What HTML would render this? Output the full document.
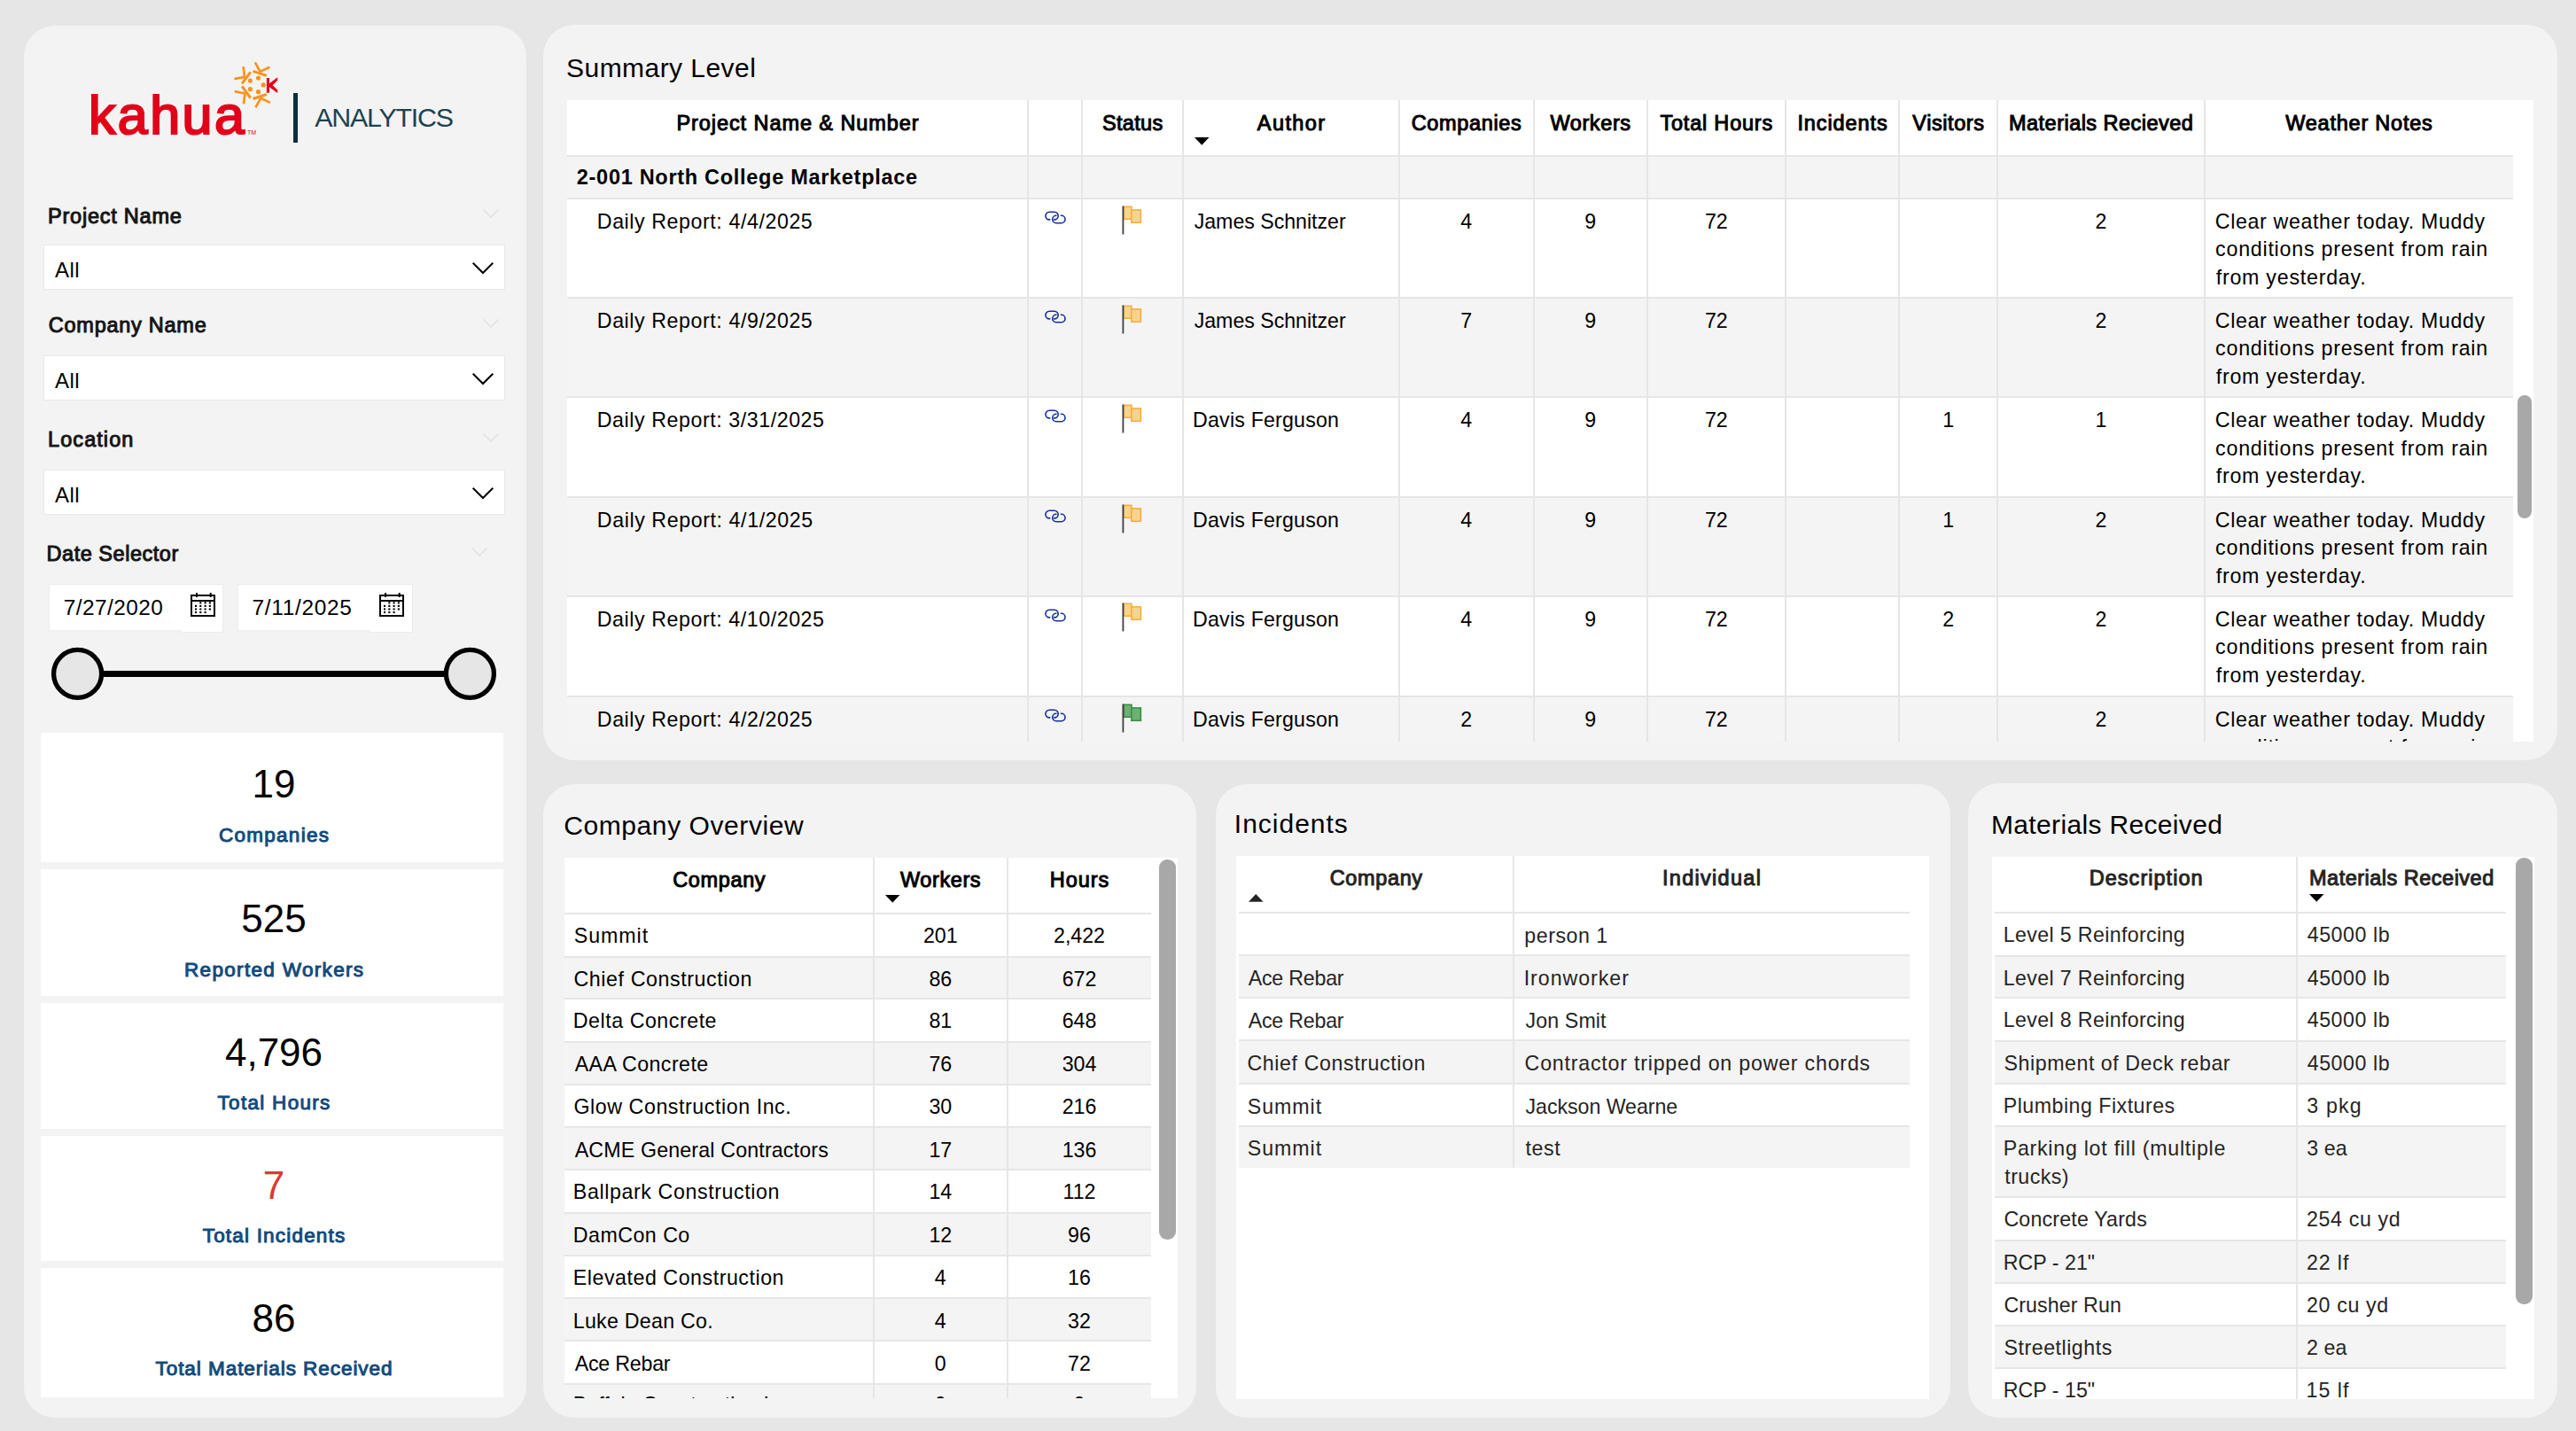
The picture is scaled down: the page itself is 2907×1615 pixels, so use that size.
<!DOCTYPE html>
<html><head><meta charset="utf-8"><title>Kahua Analytics</title>
<style>
html,body{margin:0;padding:0;}
body{width:2907px;height:1615px;position:relative;overflow:hidden;background:#e6e6e6;font-family:"Liberation Sans", sans-serif;}
.t{position:absolute;white-space:nowrap;}
.b{position:absolute;}
svg{position:absolute;overflow:visible;}
</style></head><body>

<div class="b" style="left:26.5px;top:29.0px;width:567.0px;height:1571.0px;background:#f3f3f3;border-radius:35px;"></div>
<div class="b" style="left:613.0px;top:28.0px;width:2273.0px;height:830.0px;background:#f3f3f3;border-radius:35px;"></div>
<div class="b" style="left:613.0px;top:885.0px;width:737.0px;height:715.0px;background:#f3f3f3;border-radius:35px;"></div>
<div class="b" style="left:1372.0px;top:885.0px;width:829.0px;height:715.0px;background:#f3f3f3;border-radius:35px;"></div>
<div class="b" style="left:2221.0px;top:884.0px;width:665.0px;height:716.0px;background:#f3f3f3;border-radius:35px;"></div>
<div class="t" style="left:99.9px;top:100.0px;font-size:61px;line-height:61px;color:#e2001a;-webkit-text-stroke:2.2px #e2001a;letter-spacing:2.45px;">kahua</div>
<div class="t" style="left:278.9px;top:146.1px;font-size:7px;line-height:7px;font-weight:400;color:#e2001a;">TM</div>
<svg style="left:250px;top:60px;" width="80" height="72" viewBox="250 60 80 72">
<g transform="translate(289,95.9)" fill="none" stroke="#f7941d"><g transform="rotate(18)"><path d="M-8.1,-13.7 L8.1,-13.7" stroke-width="3.1"/><path d="M-9,-23.9 L-0.4,-15.8 L8.4,-23.9" stroke-width="2.7" stroke-linejoin="round"/></g><g transform="rotate(-54)"><path d="M-8.1,-13.7 L8.1,-13.7" stroke-width="3.1"/><path d="M-9,-23.9 L-0.4,-15.8 L8.4,-23.9" stroke-width="2.7" stroke-linejoin="round"/></g><g transform="rotate(-126)"><path d="M-8.1,-13.7 L8.1,-13.7" stroke-width="3.1"/><path d="M-9,-23.9 L-0.4,-15.8 L8.4,-23.9" stroke-width="2.7" stroke-linejoin="round"/></g><g transform="rotate(162)"><path d="M-8.1,-13.7 L8.1,-13.7" stroke-width="3.1"/><path d="M-9,-23.9 L-0.4,-15.8 L8.4,-23.9" stroke-width="2.7" stroke-linejoin="round"/></g></g>
<g fill="#f7941d" transform="translate(289,95.9)">
<circle cx="8.2" cy="0" r="2.6"/><circle cx="2.53" cy="-7.8" r="2.6"/><circle cx="-6.63" cy="-4.82" r="2.6"/><circle cx="-6.63" cy="4.82" r="2.6"/><circle cx="2.53" cy="7.8" r="2.6"/>
</g>
<path fill="#e2001a" d="M300.9,88 L303.9,88 L303.9,94.2 L313.2,87.3 L313.2,90.8 L307.6,96.3 L313.2,101.4 L313.2,104.9 L303.9,98.3 L303.9,104.7 L300.9,104.7 Z"/>
</svg>
<div class="b" style="left:331.0px;top:105.0px;width:5.0px;height:56.0px;background:#06303d;"></div>
<div class="t" style="left:355.3px;top:116.8px;font-size:30.4px;line-height:30.4px;font-weight:400;color:#1d4250;letter-spacing:-1.24px;">ANALYTICS</div>
<div class="t" style="left:54.1px;top:232.5px;font-size:23.5px;line-height:23.5px;font-weight:400;color:#151515;letter-spacing:0.759px;-webkit-text-stroke:1.0px #151515;">Project Name</div>
<svg style="left:545px;top:236.0px;" width="18" height="10" viewBox="0 0 18 10"><path d="M0.5,0.5 L9,9 L17.5,0.5" fill="none" stroke="#e2e2e2" stroke-width="1.6"/></svg>
<div class="b" style="left:48.6px;top:275.5px;width:521.4px;height:51.9px;background:#ffffff;box-sizing:border-box;border:1px solid #e8e8e8;"></div>
<div class="t" style="left:62.0px;top:292.5px;font-size:24px;line-height:24px;font-weight:400;color:#000;letter-spacing:0.510px;">All</div>
<svg style="left:533px;top:295.9px;" width="24" height="13" viewBox="0 0 24 13"><path d="M0.7,0.7 L12,12 L23.3,0.7" fill="none" stroke="#000" stroke-width="2"/></svg>
<div class="t" style="left:54.8px;top:356.1px;font-size:23.5px;line-height:23.5px;font-weight:400;color:#151515;letter-spacing:0.740px;-webkit-text-stroke:1.0px #151515;">Company Name</div>
<svg style="left:545px;top:360.0px;" width="18" height="10" viewBox="0 0 18 10"><path d="M0.5,0.5 L9,9 L17.5,0.5" fill="none" stroke="#e2e2e2" stroke-width="1.6"/></svg>
<div class="b" style="left:48.6px;top:400.9px;width:521.4px;height:50.7px;background:#ffffff;box-sizing:border-box;border:1px solid #e8e8e8;"></div>
<div class="t" style="left:62.0px;top:417.9px;font-size:24px;line-height:24px;font-weight:400;color:#000;letter-spacing:0.510px;">All</div>
<svg style="left:533px;top:420.8px;" width="24" height="13" viewBox="0 0 24 13"><path d="M0.7,0.7 L12,12 L23.3,0.7" fill="none" stroke="#000" stroke-width="2"/></svg>
<div class="t" style="left:54.1px;top:484.6px;font-size:23.5px;line-height:23.5px;font-weight:400;color:#151515;letter-spacing:1.054px;-webkit-text-stroke:1.0px #151515;">Location</div>
<svg style="left:545px;top:489.0px;" width="18" height="10" viewBox="0 0 18 10"><path d="M0.5,0.5 L9,9 L17.5,0.5" fill="none" stroke="#e2e2e2" stroke-width="1.6"/></svg>
<div class="b" style="left:48.6px;top:530.0px;width:521.4px;height:50.8px;background:#ffffff;box-sizing:border-box;border:1px solid #e8e8e8;"></div>
<div class="t" style="left:62.0px;top:547.0px;font-size:24px;line-height:24px;font-weight:400;color:#000;letter-spacing:0.510px;">All</div>
<svg style="left:533px;top:549.9px;" width="24" height="13" viewBox="0 0 24 13"><path d="M0.7,0.7 L12,12 L23.3,0.7" fill="none" stroke="#000" stroke-width="2"/></svg>
<div class="t" style="left:52.6px;top:613.8px;font-size:23.5px;line-height:23.5px;font-weight:400;color:#151515;letter-spacing:0.520px;-webkit-text-stroke:1.0px #151515;">Date Selector</div>
<svg style="left:532px;top:618px;" width="18" height="10" viewBox="0 0 18 10"><path d="M0.5,0.5 L9,9 L17.5,0.5" fill="none" stroke="#e2e2e2" stroke-width="1.6"/></svg>
<div class="b" style="left:54.7px;top:659.0px;width:197.3px;height:55.0px;background:#ffffff;box-sizing:border-box;border:1px solid #ebebeb;"></div>
<div class="b" style="left:55.7px;top:711.0px;width:149.6px;height:3.0px;background:#f1f1f1;"></div>
<div class="t" style="left:71.8px;top:673.9px;font-size:24.4px;line-height:24.4px;font-weight:400;color:#000;letter-spacing:0.449px;">7/27/2020</div>
<svg style="left:214.7px;top:668.8px;" width="30" height="28" viewBox="0 0 30 28">
<rect x="1" y="3" width="26" height="23" fill="none" stroke="#000" stroke-width="2"/>
<line x1="1" y1="9" x2="27" y2="9" stroke="#000" stroke-width="2"/>
<line x1="7" y1="0" x2="7" y2="5" stroke="#000" stroke-width="2"/>
<line x1="22.7" y1="0" x2="22.7" y2="5" stroke="#000" stroke-width="2"/>
<g fill="#000"><rect x="10.27" y="10.30" width="2.1" height="2.1"/><rect x="15.54" y="10.30" width="2.1" height="2.1"/><rect x="20.81" y="10.30" width="2.1" height="2.1"/><rect x="5.00" y="13.87" width="2.1" height="2.1"/><rect x="10.27" y="13.87" width="2.1" height="2.1"/><rect x="15.54" y="13.87" width="2.1" height="2.1"/><rect x="20.81" y="13.87" width="2.1" height="2.1"/><rect x="5.00" y="17.44" width="2.1" height="2.1"/><rect x="10.27" y="17.44" width="2.1" height="2.1"/><rect x="15.54" y="17.44" width="2.1" height="2.1"/><rect x="20.81" y="17.44" width="2.1" height="2.1"/><rect x="5.00" y="21.01" width="2.1" height="2.1"/><rect x="10.27" y="21.01" width="2.1" height="2.1"/><rect x="15.54" y="21.01" width="2.1" height="2.1"/></g></svg>
<div class="b" style="left:267.5px;top:659.0px;width:198.5px;height:55.0px;background:#ffffff;box-sizing:border-box;border:1px solid #ebebeb;"></div>
<div class="b" style="left:268.5px;top:711.0px;width:149.6px;height:3.0px;background:#f1f1f1;"></div>
<div class="t" style="left:284.6px;top:673.9px;font-size:24.4px;line-height:24.4px;font-weight:400;color:#000;letter-spacing:0.693px;">7/11/2025</div>
<svg style="left:427.5px;top:668.8px;" width="30" height="28" viewBox="0 0 30 28">
<rect x="1" y="3" width="26" height="23" fill="none" stroke="#000" stroke-width="2"/>
<line x1="1" y1="9" x2="27" y2="9" stroke="#000" stroke-width="2"/>
<line x1="7" y1="0" x2="7" y2="5" stroke="#000" stroke-width="2"/>
<line x1="22.7" y1="0" x2="22.7" y2="5" stroke="#000" stroke-width="2"/>
<g fill="#000"><rect x="10.27" y="10.30" width="2.1" height="2.1"/><rect x="15.54" y="10.30" width="2.1" height="2.1"/><rect x="20.81" y="10.30" width="2.1" height="2.1"/><rect x="5.00" y="13.87" width="2.1" height="2.1"/><rect x="10.27" y="13.87" width="2.1" height="2.1"/><rect x="15.54" y="13.87" width="2.1" height="2.1"/><rect x="20.81" y="13.87" width="2.1" height="2.1"/><rect x="5.00" y="17.44" width="2.1" height="2.1"/><rect x="10.27" y="17.44" width="2.1" height="2.1"/><rect x="15.54" y="17.44" width="2.1" height="2.1"/><rect x="20.81" y="17.44" width="2.1" height="2.1"/><rect x="5.00" y="21.01" width="2.1" height="2.1"/><rect x="10.27" y="21.01" width="2.1" height="2.1"/><rect x="15.54" y="21.01" width="2.1" height="2.1"/></g></svg>
<svg style="left:0px;top:0px;" width="620" height="820">
<line x1="110" y1="760.4" x2="510" y2="760.4" stroke="#000" stroke-width="7"/>
<circle cx="87.6" cy="760.4" r="27" fill="#e6e6e6" stroke="#000" stroke-width="5.3"/>
<circle cx="530.4" cy="760.4" r="27" fill="#e6e6e6" stroke="#000" stroke-width="5.3"/>
</svg>
<div class="b" style="left:46.0px;top:827.0px;width:522.0px;height:146.0px;background:#ffffff;"></div>
<div class="t" style="left:59.0px;width:500px;text-align:center;top:862.7px;font-size:44px;line-height:44px;font-weight:400;color:#000;">19</div>
<div class="t" style="left:59.6px;width:500px;text-align:center;top:931.6px;font-size:22.5px;line-height:22.5px;font-weight:400;color:#114a7d;letter-spacing:1.270px;-webkit-text-stroke:1.0px #114a7d;">Companies</div>
<div class="b" style="left:46.0px;top:980.5px;width:522.0px;height:143.5px;background:#ffffff;"></div>
<div class="t" style="left:59.0px;width:500px;text-align:center;top:1014.7px;font-size:44px;line-height:44px;font-weight:400;color:#000;">525</div>
<div class="t" style="left:59.7px;width:500px;text-align:center;top:1083.9px;font-size:22.5px;line-height:22.5px;font-weight:400;color:#114a7d;letter-spacing:1.330px;-webkit-text-stroke:1.0px #114a7d;">Reported Workers</div>
<div class="b" style="left:46.0px;top:1132.0px;width:522.0px;height:142.0px;background:#ffffff;"></div>
<div class="t" style="left:59.0px;width:500px;text-align:center;top:1165.5px;font-size:44px;line-height:44px;font-weight:400;color:#000;">4,796</div>
<div class="t" style="left:59.6px;width:500px;text-align:center;top:1233.9px;font-size:22.5px;line-height:22.5px;font-weight:400;color:#114a7d;letter-spacing:1.299px;-webkit-text-stroke:1.0px #114a7d;">Total Hours</div>
<div class="b" style="left:46.0px;top:1282.0px;width:522.0px;height:141.0px;background:#ffffff;"></div>
<div class="t" style="left:59.0px;width:500px;text-align:center;top:1315.7px;font-size:44px;line-height:44px;font-weight:400;color:#d83b2f;">7</div>
<div class="t" style="left:59.6px;width:500px;text-align:center;top:1383.9px;font-size:22.5px;line-height:22.5px;font-weight:400;color:#114a7d;letter-spacing:1.196px;-webkit-text-stroke:1.0px #114a7d;">Total Incidents</div>
<div class="b" style="left:46.0px;top:1430.6px;width:522.0px;height:146.4px;background:#ffffff;"></div>
<div class="t" style="left:59.0px;width:500px;text-align:center;top:1465.7px;font-size:44px;line-height:44px;font-weight:400;color:#000;">86</div>
<div class="t" style="left:59.5px;width:500px;text-align:center;top:1533.9px;font-size:22.5px;line-height:22.5px;font-weight:400;color:#114a7d;letter-spacing:0.955px;-webkit-text-stroke:1.0px #114a7d;">Total Materials Received</div>
<div class="t" style="left:639.1px;top:61.6px;font-size:30px;line-height:30px;font-weight:400;color:#000;letter-spacing:0.446px;">Summary Level</div>
<div class="b" style="left:640.0px;top:113.0px;width:2219.0px;height:724.0px;background:#ffffff;"></div>
<div class="b" style="left:640.0px;top:177.0px;width:2196.0px;height:47.0px;background:#f4f4f4;"></div>
<div class="b" style="left:640.0px;top:336.0px;width:2196.0px;height:112.3px;background:#f4f4f4;"></div>
<div class="b" style="left:640.0px;top:561.0px;width:2196.0px;height:111.8px;background:#f4f4f4;"></div>
<div class="b" style="left:640.0px;top:786.0px;width:2196.0px;height:51.0px;background:#f4f4f4;"></div>
<div class="b" style="left:640.0px;top:175.0px;width:2196.0px;height:2.0px;background:#e6e6e6;"></div>
<div class="b" style="left:640.0px;top:223.0px;width:2196.0px;height:2.0px;background:#e6e6e6;"></div>
<div class="b" style="left:640.0px;top:335.0px;width:2196.0px;height:2.0px;background:#e6e6e6;"></div>
<div class="b" style="left:640.0px;top:447.3px;width:2196.0px;height:2.0px;background:#e6e6e6;"></div>
<div class="b" style="left:640.0px;top:560.0px;width:2196.0px;height:2.0px;background:#e6e6e6;"></div>
<div class="b" style="left:640.0px;top:671.8px;width:2196.0px;height:2.0px;background:#e6e6e6;"></div>
<div class="b" style="left:640.0px;top:785.0px;width:2196.0px;height:2.0px;background:#e6e6e6;"></div>
<div class="b" style="left:1159.0px;top:113.0px;width:2.0px;height:724.0px;background:#e6e6e6;"></div>
<div class="b" style="left:1220.0px;top:113.0px;width:2.0px;height:724.0px;background:#e6e6e6;"></div>
<div class="b" style="left:1334.0px;top:113.0px;width:2.0px;height:724.0px;background:#e6e6e6;"></div>
<div class="b" style="left:1578.0px;top:113.0px;width:2.0px;height:724.0px;background:#e6e6e6;"></div>
<div class="b" style="left:1729.5px;top:113.0px;width:2.0px;height:724.0px;background:#e6e6e6;"></div>
<div class="b" style="left:1858.0px;top:113.0px;width:2.0px;height:724.0px;background:#e6e6e6;"></div>
<div class="b" style="left:2013.7px;top:113.0px;width:2.0px;height:724.0px;background:#e6e6e6;"></div>
<div class="b" style="left:2142.4px;top:113.0px;width:2.0px;height:724.0px;background:#e6e6e6;"></div>
<div class="b" style="left:2253.0px;top:113.0px;width:2.0px;height:724.0px;background:#e6e6e6;"></div>
<div class="b" style="left:2487.0px;top:113.0px;width:2.0px;height:724.0px;background:#e6e6e6;"></div>
<div class="t" style="left:640.5px;width:520px;text-align:center;top:127.9px;font-size:23.5px;line-height:23.5px;font-weight:400;color:#000;letter-spacing:0.930px;-webkit-text-stroke:1.0px #000;">Project Name &amp; Number</div>
<div class="t" style="left:1221.2px;width:114px;text-align:center;top:127.9px;font-size:23.5px;line-height:23.5px;font-weight:400;color:#000;letter-spacing:0.332px;-webkit-text-stroke:1.0px #000;">Status</div>
<div class="t" style="left:1335.7px;width:244px;text-align:center;top:127.9px;font-size:23.5px;line-height:23.5px;font-weight:400;color:#000;letter-spacing:1.429px;-webkit-text-stroke:1.0px #000;">Author</div>
<div class="t" style="left:1579.3px;width:151.5px;text-align:center;top:127.9px;font-size:23.5px;line-height:23.5px;font-weight:400;color:#000;letter-spacing:0.648px;-webkit-text-stroke:1.0px #000;">Companies</div>
<div class="t" style="left:1730.8px;width:128.5px;text-align:center;top:127.9px;font-size:23.5px;line-height:23.5px;font-weight:400;color:#000;letter-spacing:0.595px;-webkit-text-stroke:1.0px #000;">Workers</div>
<div class="t" style="left:1859.4px;width:155.70000000000005px;text-align:center;top:127.9px;font-size:23.5px;line-height:23.5px;font-weight:400;color:#000;letter-spacing:0.798px;-webkit-text-stroke:1.0px #000;">Total Hours</div>
<div class="t" style="left:2015.2px;width:128.70000000000005px;text-align:center;top:127.9px;font-size:23.5px;line-height:23.5px;font-weight:400;color:#000;letter-spacing:0.903px;-webkit-text-stroke:1.0px #000;">Incidents</div>
<div class="t" style="left:2143.7px;width:110.59999999999991px;text-align:center;top:127.9px;font-size:23.5px;line-height:23.5px;font-weight:400;color:#000;letter-spacing:0.576px;-webkit-text-stroke:1.0px #000;">Visitors</div>
<div class="t" style="left:2254.2px;width:234px;text-align:center;top:127.9px;font-size:23.5px;line-height:23.5px;font-weight:400;color:#000;letter-spacing:0.473px;-webkit-text-stroke:1.0px #000;">Materials Recieved</div>
<div class="t" style="left:2488.4px;width:348px;text-align:center;top:127.9px;font-size:23.5px;line-height:23.5px;font-weight:400;color:#000;letter-spacing:0.772px;-webkit-text-stroke:1.0px #000;">Weather Notes</div>
<svg style="left:1348px;top:155px;" width="17" height="9" viewBox="0 0 17 9"><path d="M0,0 L16.5,0 L8.25,8.7 Z" fill="#000"/></svg>
<div class="t" style="left:650.8px;top:189.1px;font-size:23.5px;line-height:23.5px;font-weight:700;color:#000;letter-spacing:0.706px;">2-001 North College Marketplace</div>
<div style="position:absolute;left:0;top:0;width:2907px;height:837px;overflow:hidden;">
<div class="t" style="left:673.8px;top:238.7px;font-size:23.2px;line-height:23.2px;font-weight:400;color:#000;letter-spacing:0.583px;">Daily Report: 4/4/2025</div>
<svg style="left:1177.0px;top:237.0px;" width="28" height="18" viewBox="0 0 28 18"><g fill="none" stroke="#14309a" stroke-width="1.6" stroke-linecap="round"><path d="M7.7,10.9 L7.25,10.9 A4.35,4.35 0 0 1 7.25,2.2 L12.85,2.2 A4.35,4.35 0 0 1 12.85,10.9 L12.6,10.9"/><path d="M14.95,6.2 A4.25,4.25 0 0 0 14.95,14.7 L20.75,14.7 A4.25,4.25 0 0 0 20.75,6.2 L20.4,6.2"/></g></svg>
<svg style="left:1266.0px;top:231.6px;" width="24" height="34" viewBox="0 0 24 34"><rect x="2.2" y="1.3" width="8.8" height="14" fill="#f7d38f" stroke="#f5ac3c" stroke-width="1.5"/><rect x="10.8" y="4.9" width="10.6" height="14.4" fill="#f7d38f" stroke="#f5ac3c" stroke-width="1.5"/><line x1="1.4" y1="0.5" x2="1.4" y2="32.5" stroke="#3f3f3f" stroke-width="1.8"/></svg>
<div class="t" style="left:1347.7px;top:238.7px;font-size:23.2px;line-height:23.2px;font-weight:400;color:#000;letter-spacing:-0.032px;">James Schnitzer</div>
<div class="t" style="left:1594.8px;width:120px;text-align:center;top:238.7px;font-size:23.2px;line-height:23.2px;font-weight:400;color:#000;">4</div>
<div class="t" style="left:1734.8px;width:120px;text-align:center;top:238.7px;font-size:23.2px;line-height:23.2px;font-weight:400;color:#000;">9</div>
<div class="t" style="left:1876.8px;width:120px;text-align:center;top:238.7px;font-size:23.2px;line-height:23.2px;font-weight:400;color:#000;">72</div>
<div class="t" style="left:2311.0px;width:120px;text-align:center;top:238.7px;font-size:23.2px;line-height:23.2px;font-weight:400;color:#000;">2</div>
<div class="t" style="left:2499.8px;top:238.7px;font-size:23.2px;line-height:23.2px;font-weight:400;color:#000;letter-spacing:0.643px;">Clear weather today. Muddy</div>
<div class="t" style="left:2500.1px;top:270.3px;font-size:23.2px;line-height:23.2px;font-weight:400;color:#000;letter-spacing:0.776px;">conditions present from rain</div>
<div class="t" style="left:2500.7px;top:301.9px;font-size:23.2px;line-height:23.2px;font-weight:400;color:#000;letter-spacing:0.773px;">from yesterday.</div>
<div class="t" style="left:673.8px;top:350.7px;font-size:23.2px;line-height:23.2px;font-weight:400;color:#000;letter-spacing:0.583px;">Daily Report: 4/9/2025</div>
<svg style="left:1177.0px;top:349.0px;" width="28" height="18" viewBox="0 0 28 18"><g fill="none" stroke="#14309a" stroke-width="1.6" stroke-linecap="round"><path d="M7.7,10.9 L7.25,10.9 A4.35,4.35 0 0 1 7.25,2.2 L12.85,2.2 A4.35,4.35 0 0 1 12.85,10.9 L12.6,10.9"/><path d="M14.95,6.2 A4.25,4.25 0 0 0 14.95,14.7 L20.75,14.7 A4.25,4.25 0 0 0 20.75,6.2 L20.4,6.2"/></g></svg>
<svg style="left:1266.0px;top:343.6px;" width="24" height="34" viewBox="0 0 24 34"><rect x="2.2" y="1.3" width="8.8" height="14" fill="#f7d38f" stroke="#f5ac3c" stroke-width="1.5"/><rect x="10.8" y="4.9" width="10.6" height="14.4" fill="#f7d38f" stroke="#f5ac3c" stroke-width="1.5"/><line x1="1.4" y1="0.5" x2="1.4" y2="32.5" stroke="#3f3f3f" stroke-width="1.8"/></svg>
<div class="t" style="left:1347.7px;top:350.7px;font-size:23.2px;line-height:23.2px;font-weight:400;color:#000;letter-spacing:-0.032px;">James Schnitzer</div>
<div class="t" style="left:1594.8px;width:120px;text-align:center;top:350.7px;font-size:23.2px;line-height:23.2px;font-weight:400;color:#000;">7</div>
<div class="t" style="left:1734.8px;width:120px;text-align:center;top:350.7px;font-size:23.2px;line-height:23.2px;font-weight:400;color:#000;">9</div>
<div class="t" style="left:1876.8px;width:120px;text-align:center;top:350.7px;font-size:23.2px;line-height:23.2px;font-weight:400;color:#000;">72</div>
<div class="t" style="left:2311.0px;width:120px;text-align:center;top:350.7px;font-size:23.2px;line-height:23.2px;font-weight:400;color:#000;">2</div>
<div class="t" style="left:2499.8px;top:350.7px;font-size:23.2px;line-height:23.2px;font-weight:400;color:#000;letter-spacing:0.643px;">Clear weather today. Muddy</div>
<div class="t" style="left:2500.1px;top:382.3px;font-size:23.2px;line-height:23.2px;font-weight:400;color:#000;letter-spacing:0.776px;">conditions present from rain</div>
<div class="t" style="left:2500.7px;top:413.9px;font-size:23.2px;line-height:23.2px;font-weight:400;color:#000;letter-spacing:0.773px;">from yesterday.</div>
<div class="t" style="left:673.8px;top:463.0px;font-size:23.2px;line-height:23.2px;font-weight:400;color:#000;letter-spacing:0.571px;">Daily Report: 3/31/2025</div>
<svg style="left:1177.0px;top:461.3px;" width="28" height="18" viewBox="0 0 28 18"><g fill="none" stroke="#14309a" stroke-width="1.6" stroke-linecap="round"><path d="M7.7,10.9 L7.25,10.9 A4.35,4.35 0 0 1 7.25,2.2 L12.85,2.2 A4.35,4.35 0 0 1 12.85,10.9 L12.6,10.9"/><path d="M14.95,6.2 A4.25,4.25 0 0 0 14.95,14.7 L20.75,14.7 A4.25,4.25 0 0 0 20.75,6.2 L20.4,6.2"/></g></svg>
<svg style="left:1266.0px;top:455.9px;" width="24" height="34" viewBox="0 0 24 34"><rect x="2.2" y="1.3" width="8.8" height="14" fill="#f7d38f" stroke="#f5ac3c" stroke-width="1.5"/><rect x="10.8" y="4.9" width="10.6" height="14.4" fill="#f7d38f" stroke="#f5ac3c" stroke-width="1.5"/><line x1="1.4" y1="0.5" x2="1.4" y2="32.5" stroke="#3f3f3f" stroke-width="1.8"/></svg>
<div class="t" style="left:1346.1px;top:463.0px;font-size:23.2px;line-height:23.2px;font-weight:400;color:#000;letter-spacing:0.190px;">Davis Ferguson</div>
<div class="t" style="left:1594.8px;width:120px;text-align:center;top:463.0px;font-size:23.2px;line-height:23.2px;font-weight:400;color:#000;">4</div>
<div class="t" style="left:1734.8px;width:120px;text-align:center;top:463.0px;font-size:23.2px;line-height:23.2px;font-weight:400;color:#000;">9</div>
<div class="t" style="left:1876.8px;width:120px;text-align:center;top:463.0px;font-size:23.2px;line-height:23.2px;font-weight:400;color:#000;">72</div>
<div class="t" style="left:2138.7px;width:120px;text-align:center;top:463.0px;font-size:23.2px;line-height:23.2px;font-weight:400;color:#000;">1</div>
<div class="t" style="left:2311.0px;width:120px;text-align:center;top:463.0px;font-size:23.2px;line-height:23.2px;font-weight:400;color:#000;">1</div>
<div class="t" style="left:2499.8px;top:463.0px;font-size:23.2px;line-height:23.2px;font-weight:400;color:#000;letter-spacing:0.643px;">Clear weather today. Muddy</div>
<div class="t" style="left:2500.1px;top:494.6px;font-size:23.2px;line-height:23.2px;font-weight:400;color:#000;letter-spacing:0.776px;">conditions present from rain</div>
<div class="t" style="left:2500.7px;top:526.2px;font-size:23.2px;line-height:23.2px;font-weight:400;color:#000;letter-spacing:0.773px;">from yesterday.</div>
<div class="t" style="left:673.8px;top:575.7px;font-size:23.2px;line-height:23.2px;font-weight:400;color:#000;letter-spacing:0.597px;">Daily Report: 4/1/2025</div>
<svg style="left:1177.0px;top:574.0px;" width="28" height="18" viewBox="0 0 28 18"><g fill="none" stroke="#14309a" stroke-width="1.6" stroke-linecap="round"><path d="M7.7,10.9 L7.25,10.9 A4.35,4.35 0 0 1 7.25,2.2 L12.85,2.2 A4.35,4.35 0 0 1 12.85,10.9 L12.6,10.9"/><path d="M14.95,6.2 A4.25,4.25 0 0 0 14.95,14.7 L20.75,14.7 A4.25,4.25 0 0 0 20.75,6.2 L20.4,6.2"/></g></svg>
<svg style="left:1266.0px;top:568.6px;" width="24" height="34" viewBox="0 0 24 34"><rect x="2.2" y="1.3" width="8.8" height="14" fill="#f7d38f" stroke="#f5ac3c" stroke-width="1.5"/><rect x="10.8" y="4.9" width="10.6" height="14.4" fill="#f7d38f" stroke="#f5ac3c" stroke-width="1.5"/><line x1="1.4" y1="0.5" x2="1.4" y2="32.5" stroke="#3f3f3f" stroke-width="1.8"/></svg>
<div class="t" style="left:1346.1px;top:575.7px;font-size:23.2px;line-height:23.2px;font-weight:400;color:#000;letter-spacing:0.190px;">Davis Ferguson</div>
<div class="t" style="left:1594.8px;width:120px;text-align:center;top:575.7px;font-size:23.2px;line-height:23.2px;font-weight:400;color:#000;">4</div>
<div class="t" style="left:1734.8px;width:120px;text-align:center;top:575.7px;font-size:23.2px;line-height:23.2px;font-weight:400;color:#000;">9</div>
<div class="t" style="left:1876.8px;width:120px;text-align:center;top:575.7px;font-size:23.2px;line-height:23.2px;font-weight:400;color:#000;">72</div>
<div class="t" style="left:2138.7px;width:120px;text-align:center;top:575.7px;font-size:23.2px;line-height:23.2px;font-weight:400;color:#000;">1</div>
<div class="t" style="left:2311.0px;width:120px;text-align:center;top:575.7px;font-size:23.2px;line-height:23.2px;font-weight:400;color:#000;">2</div>
<div class="t" style="left:2499.8px;top:575.7px;font-size:23.2px;line-height:23.2px;font-weight:400;color:#000;letter-spacing:0.643px;">Clear weather today. Muddy</div>
<div class="t" style="left:2500.1px;top:607.3px;font-size:23.2px;line-height:23.2px;font-weight:400;color:#000;letter-spacing:0.776px;">conditions present from rain</div>
<div class="t" style="left:2500.7px;top:638.9px;font-size:23.2px;line-height:23.2px;font-weight:400;color:#000;letter-spacing:0.773px;">from yesterday.</div>
<div class="t" style="left:673.8px;top:687.5px;font-size:23.2px;line-height:23.2px;font-weight:400;color:#000;letter-spacing:0.571px;">Daily Report: 4/10/2025</div>
<svg style="left:1177.0px;top:685.8px;" width="28" height="18" viewBox="0 0 28 18"><g fill="none" stroke="#14309a" stroke-width="1.6" stroke-linecap="round"><path d="M7.7,10.9 L7.25,10.9 A4.35,4.35 0 0 1 7.25,2.2 L12.85,2.2 A4.35,4.35 0 0 1 12.85,10.9 L12.6,10.9"/><path d="M14.95,6.2 A4.25,4.25 0 0 0 14.95,14.7 L20.75,14.7 A4.25,4.25 0 0 0 20.75,6.2 L20.4,6.2"/></g></svg>
<svg style="left:1266.0px;top:680.4px;" width="24" height="34" viewBox="0 0 24 34"><rect x="2.2" y="1.3" width="8.8" height="14" fill="#f7d38f" stroke="#f5ac3c" stroke-width="1.5"/><rect x="10.8" y="4.9" width="10.6" height="14.4" fill="#f7d38f" stroke="#f5ac3c" stroke-width="1.5"/><line x1="1.4" y1="0.5" x2="1.4" y2="32.5" stroke="#3f3f3f" stroke-width="1.8"/></svg>
<div class="t" style="left:1346.1px;top:687.5px;font-size:23.2px;line-height:23.2px;font-weight:400;color:#000;letter-spacing:0.190px;">Davis Ferguson</div>
<div class="t" style="left:1594.8px;width:120px;text-align:center;top:687.5px;font-size:23.2px;line-height:23.2px;font-weight:400;color:#000;">4</div>
<div class="t" style="left:1734.8px;width:120px;text-align:center;top:687.5px;font-size:23.2px;line-height:23.2px;font-weight:400;color:#000;">9</div>
<div class="t" style="left:1876.8px;width:120px;text-align:center;top:687.5px;font-size:23.2px;line-height:23.2px;font-weight:400;color:#000;">72</div>
<div class="t" style="left:2138.7px;width:120px;text-align:center;top:687.5px;font-size:23.2px;line-height:23.2px;font-weight:400;color:#000;">2</div>
<div class="t" style="left:2311.0px;width:120px;text-align:center;top:687.5px;font-size:23.2px;line-height:23.2px;font-weight:400;color:#000;">2</div>
<div class="t" style="left:2499.8px;top:687.5px;font-size:23.2px;line-height:23.2px;font-weight:400;color:#000;letter-spacing:0.643px;">Clear weather today. Muddy</div>
<div class="t" style="left:2500.1px;top:719.1px;font-size:23.2px;line-height:23.2px;font-weight:400;color:#000;letter-spacing:0.776px;">conditions present from rain</div>
<div class="t" style="left:2500.7px;top:750.7px;font-size:23.2px;line-height:23.2px;font-weight:400;color:#000;letter-spacing:0.773px;">from yesterday.</div>
<div class="t" style="left:673.8px;top:800.7px;font-size:23.2px;line-height:23.2px;font-weight:400;color:#000;letter-spacing:0.583px;">Daily Report: 4/2/2025</div>
<svg style="left:1177.0px;top:799.0px;" width="28" height="18" viewBox="0 0 28 18"><g fill="none" stroke="#14309a" stroke-width="1.6" stroke-linecap="round"><path d="M7.7,10.9 L7.25,10.9 A4.35,4.35 0 0 1 7.25,2.2 L12.85,2.2 A4.35,4.35 0 0 1 12.85,10.9 L12.6,10.9"/><path d="M14.95,6.2 A4.25,4.25 0 0 0 14.95,14.7 L20.75,14.7 A4.25,4.25 0 0 0 20.75,6.2 L20.4,6.2"/></g></svg>
<svg style="left:1266.0px;top:793.6px;" width="24" height="34" viewBox="0 0 24 34"><rect x="2.2" y="1.3" width="8.8" height="14" fill="#69b36f" stroke="#3e8a47" stroke-width="1.5"/><rect x="10.8" y="4.9" width="10.6" height="14.4" fill="#69b36f" stroke="#3e8a47" stroke-width="1.5"/><line x1="1.4" y1="0.5" x2="1.4" y2="32.5" stroke="#3f3f3f" stroke-width="1.8"/></svg>
<div class="t" style="left:1346.1px;top:800.7px;font-size:23.2px;line-height:23.2px;font-weight:400;color:#000;letter-spacing:0.190px;">Davis Ferguson</div>
<div class="t" style="left:1594.8px;width:120px;text-align:center;top:800.7px;font-size:23.2px;line-height:23.2px;font-weight:400;color:#000;">2</div>
<div class="t" style="left:1734.8px;width:120px;text-align:center;top:800.7px;font-size:23.2px;line-height:23.2px;font-weight:400;color:#000;">9</div>
<div class="t" style="left:1876.8px;width:120px;text-align:center;top:800.7px;font-size:23.2px;line-height:23.2px;font-weight:400;color:#000;">72</div>
<div class="t" style="left:2311.0px;width:120px;text-align:center;top:800.7px;font-size:23.2px;line-height:23.2px;font-weight:400;color:#000;">2</div>
<div class="t" style="left:2499.8px;top:800.7px;font-size:23.2px;line-height:23.2px;font-weight:400;color:#000;letter-spacing:0.643px;">Clear weather today. Muddy</div>
<div class="t" style="left:2500.1px;top:832.3px;font-size:23.2px;line-height:23.2px;font-weight:400;color:#000;letter-spacing:0.776px;">conditions present from rain</div>
<div class="t" style="left:2500.7px;top:863.9px;font-size:23.2px;line-height:23.2px;font-weight:400;color:#000;letter-spacing:0.773px;">from yesterday.</div>
</div>
<div class="b" style="left:2840.6px;top:446.0px;width:16.4px;height:139.0px;background:#a8a8a8;border-radius:8px;"></div>
<div class="t" style="left:636.3px;top:917.2px;font-size:30px;line-height:30px;font-weight:400;color:#000;letter-spacing:0.573px;">Company Overview</div>
<div class="b" style="left:637.0px;top:968.3px;width:692.0px;height:609.7px;background:#ffffff;"></div>
<div style="position:absolute;left:0;top:0;width:2907px;height:1578px;overflow:hidden;">
<div class="b" style="left:637.0px;top:1079.8px;width:662.0px;height:47.2px;background:#f4f4f4;"></div>
<div class="b" style="left:637.0px;top:1175.7px;width:662.0px;height:47.8px;background:#f4f4f4;"></div>
<div class="b" style="left:637.0px;top:1272.2px;width:662.0px;height:47.8px;background:#f4f4f4;"></div>
<div class="b" style="left:637.0px;top:1368.7px;width:662.0px;height:47.8px;background:#f4f4f4;"></div>
<div class="b" style="left:637.0px;top:1465.2px;width:662.0px;height:48.1px;background:#f4f4f4;"></div>
<div class="b" style="left:637.0px;top:1562.0px;width:662.0px;height:16.0px;background:#f4f4f4;"></div>
<div class="b" style="left:637.0px;top:1029.5px;width:662.0px;height:2.0px;background:#e6e6e6;"></div>
<div class="b" style="left:637.0px;top:1078.8px;width:662.0px;height:2.0px;background:#e6e6e6;"></div>
<div class="b" style="left:637.0px;top:1126.0px;width:662.0px;height:2.0px;background:#e6e6e6;"></div>
<div class="b" style="left:637.0px;top:1174.7px;width:662.0px;height:2.0px;background:#e6e6e6;"></div>
<div class="b" style="left:637.0px;top:1222.5px;width:662.0px;height:2.0px;background:#e6e6e6;"></div>
<div class="b" style="left:637.0px;top:1271.2px;width:662.0px;height:2.0px;background:#e6e6e6;"></div>
<div class="b" style="left:637.0px;top:1319.0px;width:662.0px;height:2.0px;background:#e6e6e6;"></div>
<div class="b" style="left:637.0px;top:1367.7px;width:662.0px;height:2.0px;background:#e6e6e6;"></div>
<div class="b" style="left:637.0px;top:1415.5px;width:662.0px;height:2.0px;background:#e6e6e6;"></div>
<div class="b" style="left:637.0px;top:1464.2px;width:662.0px;height:2.0px;background:#e6e6e6;"></div>
<div class="b" style="left:637.0px;top:1512.3px;width:662.0px;height:2.0px;background:#e6e6e6;"></div>
<div class="b" style="left:637.0px;top:1561.0px;width:662.0px;height:2.0px;background:#e6e6e6;"></div>
<div class="b" style="left:984.7px;top:968.3px;width:2.0px;height:609.7px;background:#e6e6e6;"></div>
<div class="b" style="left:1136.0px;top:968.3px;width:2.0px;height:609.7px;background:#e6e6e6;"></div>
<div class="t" style="left:647.7px;top:1044.9px;font-size:23.2px;line-height:23.2px;font-weight:400;color:#000;letter-spacing:0.986px;">Summit</div>
<div class="t" style="left:991.3px;width:140px;text-align:center;top:1044.9px;font-size:23.2px;line-height:23.2px;font-weight:400;color:#000;">201</div>
<div class="t" style="left:1148.0px;width:140px;text-align:center;top:1044.9px;font-size:23.2px;line-height:23.2px;font-weight:400;color:#000;">2,422</div>
<div class="t" style="left:647.5px;top:1094.2px;font-size:23.2px;line-height:23.2px;font-weight:400;color:#000;letter-spacing:0.603px;">Chief Construction</div>
<div class="t" style="left:991.3px;width:140px;text-align:center;top:1094.2px;font-size:23.2px;line-height:23.2px;font-weight:400;color:#000;">86</div>
<div class="t" style="left:1148.0px;width:140px;text-align:center;top:1094.2px;font-size:23.2px;line-height:23.2px;font-weight:400;color:#000;">672</div>
<div class="t" style="left:646.8px;top:1141.4px;font-size:23.2px;line-height:23.2px;font-weight:400;color:#000;letter-spacing:0.543px;">Delta Concrete</div>
<div class="t" style="left:991.3px;width:140px;text-align:center;top:1141.4px;font-size:23.2px;line-height:23.2px;font-weight:400;color:#000;">81</div>
<div class="t" style="left:1148.0px;width:140px;text-align:center;top:1141.4px;font-size:23.2px;line-height:23.2px;font-weight:400;color:#000;">648</div>
<div class="t" style="left:648.7px;top:1190.1px;font-size:23.2px;line-height:23.2px;font-weight:400;color:#000;letter-spacing:0.441px;">AAA Concrete</div>
<div class="t" style="left:991.3px;width:140px;text-align:center;top:1190.1px;font-size:23.2px;line-height:23.2px;font-weight:400;color:#000;">76</div>
<div class="t" style="left:1148.0px;width:140px;text-align:center;top:1190.1px;font-size:23.2px;line-height:23.2px;font-weight:400;color:#000;">304</div>
<div class="t" style="left:647.5px;top:1237.9px;font-size:23.2px;line-height:23.2px;font-weight:400;color:#000;letter-spacing:0.570px;">Glow Construction Inc.</div>
<div class="t" style="left:991.3px;width:140px;text-align:center;top:1237.9px;font-size:23.2px;line-height:23.2px;font-weight:400;color:#000;">30</div>
<div class="t" style="left:1148.0px;width:140px;text-align:center;top:1237.9px;font-size:23.2px;line-height:23.2px;font-weight:400;color:#000;">216</div>
<div class="t" style="left:648.7px;top:1286.6px;font-size:23.2px;line-height:23.2px;font-weight:400;color:#000;letter-spacing:0.168px;">ACME General Contractors</div>
<div class="t" style="left:991.3px;width:140px;text-align:center;top:1286.6px;font-size:23.2px;line-height:23.2px;font-weight:400;color:#000;">17</div>
<div class="t" style="left:1148.0px;width:140px;text-align:center;top:1286.6px;font-size:23.2px;line-height:23.2px;font-weight:400;color:#000;">136</div>
<div class="t" style="left:646.8px;top:1334.4px;font-size:23.2px;line-height:23.2px;font-weight:400;color:#000;letter-spacing:0.617px;">Ballpark Construction</div>
<div class="t" style="left:991.3px;width:140px;text-align:center;top:1334.4px;font-size:23.2px;line-height:23.2px;font-weight:400;color:#000;">14</div>
<div class="t" style="left:1148.0px;width:140px;text-align:center;top:1334.4px;font-size:23.2px;line-height:23.2px;font-weight:400;color:#000;">112</div>
<div class="t" style="left:646.8px;top:1383.1px;font-size:23.2px;line-height:23.2px;font-weight:400;color:#000;letter-spacing:0.486px;">DamCon Co</div>
<div class="t" style="left:991.3px;width:140px;text-align:center;top:1383.1px;font-size:23.2px;line-height:23.2px;font-weight:400;color:#000;">12</div>
<div class="t" style="left:1148.0px;width:140px;text-align:center;top:1383.1px;font-size:23.2px;line-height:23.2px;font-weight:400;color:#000;">96</div>
<div class="t" style="left:646.8px;top:1430.9px;font-size:23.2px;line-height:23.2px;font-weight:400;color:#000;letter-spacing:0.543px;">Elevated Construction</div>
<div class="t" style="left:991.3px;width:140px;text-align:center;top:1430.9px;font-size:23.2px;line-height:23.2px;font-weight:400;color:#000;">4</div>
<div class="t" style="left:1148.0px;width:140px;text-align:center;top:1430.9px;font-size:23.2px;line-height:23.2px;font-weight:400;color:#000;">16</div>
<div class="t" style="left:646.8px;top:1479.6px;font-size:23.2px;line-height:23.2px;font-weight:400;color:#000;letter-spacing:0.267px;">Luke Dean Co.</div>
<div class="t" style="left:991.3px;width:140px;text-align:center;top:1479.6px;font-size:23.2px;line-height:23.2px;font-weight:400;color:#000;">4</div>
<div class="t" style="left:1148.0px;width:140px;text-align:center;top:1479.6px;font-size:23.2px;line-height:23.2px;font-weight:400;color:#000;">32</div>
<div class="t" style="left:648.7px;top:1527.7px;font-size:23.2px;line-height:23.2px;font-weight:400;color:#000;letter-spacing:-0.207px;">Ace Rebar</div>
<div class="t" style="left:991.3px;width:140px;text-align:center;top:1527.7px;font-size:23.2px;line-height:23.2px;font-weight:400;color:#000;">0</div>
<div class="t" style="left:1148.0px;width:140px;text-align:center;top:1527.7px;font-size:23.2px;line-height:23.2px;font-weight:400;color:#000;">72</div>
<div class="t" style="left:646.8px;top:1573.9px;font-size:23.2px;line-height:23.2px;font-weight:400;color:#000;">Buffalo Construction Inc.</div>
<div class="t" style="left:991.3px;width:140px;text-align:center;top:1573.9px;font-size:23.2px;line-height:23.2px;font-weight:400;color:#000;">0</div>
<div class="t" style="left:1148.0px;width:140px;text-align:center;top:1573.9px;font-size:23.2px;line-height:23.2px;font-weight:400;color:#000;">0</div>
</div>
<div class="t" style="left:641.7px;width:340px;text-align:center;top:981.6px;font-size:23.5px;line-height:23.5px;font-weight:400;color:#000;letter-spacing:0.649px;-webkit-text-stroke:1.0px #000;">Company</div>
<div class="t" style="left:986.6px;width:150px;text-align:center;top:981.6px;font-size:23.5px;line-height:23.5px;font-weight:400;color:#000;letter-spacing:0.595px;-webkit-text-stroke:1.0px #000;">Workers</div>
<div class="t" style="left:1138.5px;width:160px;text-align:center;top:981.6px;font-size:23.5px;line-height:23.5px;font-weight:400;color:#000;letter-spacing:0.964px;-webkit-text-stroke:1.0px #000;">Hours</div>
<svg style="left:999.0px;top:1010.0px;" width="17" height="9" viewBox="0 0 17 9"><path d="M0,0 L16.5,0 L8.25,8.7 Z" fill="#000"/></svg>
<div class="b" style="left:1308.0px;top:970.0px;width:18.5px;height:429.0px;background:#a8a8a8;border-radius:9px;"></div>
<div class="t" style="left:1392.8px;top:915.4px;font-size:30px;line-height:30px;font-weight:400;color:#000;letter-spacing:1.000px;">Incidents</div>
<div class="b" style="left:1394.5px;top:966.0px;width:782.5px;height:612.5px;background:#ffffff;"></div>
<div class="b" style="left:1397.8px;top:1078.4px;width:757.2px;height:47.6px;background:#f4f4f4;"></div>
<div class="b" style="left:1397.8px;top:1174.4px;width:757.2px;height:48.6px;background:#f4f4f4;"></div>
<div class="b" style="left:1397.8px;top:1270.8px;width:757.2px;height:47.2px;background:#f4f4f4;"></div>
<div class="b" style="left:1397.8px;top:1029.0px;width:757.2px;height:2.0px;background:#e6e6e6;"></div>
<div class="b" style="left:1397.8px;top:1077.4px;width:757.2px;height:2.0px;background:#e6e6e6;"></div>
<div class="b" style="left:1397.8px;top:1125.0px;width:757.2px;height:2.0px;background:#e6e6e6;"></div>
<div class="b" style="left:1397.8px;top:1173.4px;width:757.2px;height:2.0px;background:#e6e6e6;"></div>
<div class="b" style="left:1397.8px;top:1222.0px;width:757.2px;height:2.0px;background:#e6e6e6;"></div>
<div class="b" style="left:1397.8px;top:1269.8px;width:757.2px;height:2.0px;background:#e6e6e6;"></div>
<div class="b" style="left:1707.0px;top:966.0px;width:2.0px;height:352.0px;background:#e6e6e6;"></div>
<div class="t" style="left:1720.3px;top:1044.6px;font-size:23.2px;line-height:23.2px;font-weight:400;color:#252423;letter-spacing:0.529px;">person 1</div>
<div class="t" style="left:1408.7px;top:1093.0px;font-size:23.2px;line-height:23.2px;font-weight:400;color:#252423;letter-spacing:-0.207px;">Ace Rebar</div>
<div class="t" style="left:1719.7px;top:1093.0px;font-size:23.2px;line-height:23.2px;font-weight:400;color:#252423;letter-spacing:0.970px;">Ironworker</div>
<div class="t" style="left:1408.7px;top:1140.6px;font-size:23.2px;line-height:23.2px;font-weight:400;color:#252423;letter-spacing:-0.207px;">Ace Rebar</div>
<div class="t" style="left:1721.5px;top:1140.6px;font-size:23.2px;line-height:23.2px;font-weight:400;color:#252423;letter-spacing:0.119px;">Jon Smit</div>
<div class="t" style="left:1407.5px;top:1189.0px;font-size:23.2px;line-height:23.2px;font-weight:400;color:#252423;letter-spacing:0.603px;">Chief Construction</div>
<div class="t" style="left:1720.6px;top:1189.0px;font-size:23.2px;line-height:23.2px;font-weight:400;color:#252423;letter-spacing:0.791px;">Contractor tripped on power chords</div>
<div class="t" style="left:1407.7px;top:1237.6px;font-size:23.2px;line-height:23.2px;font-weight:400;color:#252423;letter-spacing:0.986px;">Summit</div>
<div class="t" style="left:1721.5px;top:1237.6px;font-size:23.2px;line-height:23.2px;font-weight:400;color:#252423;letter-spacing:-0.045px;">Jackson Wearne</div>
<div class="t" style="left:1407.7px;top:1285.4px;font-size:23.2px;line-height:23.2px;font-weight:400;color:#252423;letter-spacing:0.986px;">Summit</div>
<div class="t" style="left:1721.5px;top:1285.4px;font-size:23.2px;line-height:23.2px;font-weight:400;color:#252423;letter-spacing:0.637px;">test</div>
<div class="t" style="left:1403.2px;width:300px;text-align:center;top:980.3px;font-size:23.5px;line-height:23.5px;font-weight:400;color:#252423;letter-spacing:0.649px;-webkit-text-stroke:1.0px #252423;">Company</div>
<div class="t" style="left:1782.1px;width:300px;text-align:center;top:980.3px;font-size:23.5px;line-height:23.5px;font-weight:400;color:#252423;letter-spacing:1.284px;-webkit-text-stroke:1.0px #252423;">Individual</div>
<svg style="left:1408.7px;top:1009.0px;" width="17" height="9" viewBox="0 0 17 9"><path d="M0,8.7 L16.5,8.7 L8.25,0 Z" fill="#252423"/></svg>
<div class="t" style="left:2247.0px;top:915.6px;font-size:30px;line-height:30px;font-weight:400;color:#000;letter-spacing:0.341px;">Materials Received</div>
<div class="b" style="left:2248.0px;top:966.5px;width:612.0px;height:612.5px;background:#ffffff;"></div>
<div style="position:absolute;left:0;top:0;width:2907px;height:1579px;overflow:hidden;">
<div class="b" style="left:2251.0px;top:1078.7px;width:577.0px;height:46.9px;background:#f4f4f4;"></div>
<div class="b" style="left:2251.0px;top:1174.8px;width:577.0px;height:48.0px;background:#f4f4f4;"></div>
<div class="b" style="left:2251.0px;top:1271.2px;width:577.0px;height:79.5px;background:#f4f4f4;"></div>
<div class="b" style="left:2251.0px;top:1399.6px;width:577.0px;height:48.0px;background:#f4f4f4;"></div>
<div class="b" style="left:2251.0px;top:1495.6px;width:577.0px;height:48.1px;background:#f4f4f4;"></div>
<div class="b" style="left:2251.0px;top:1028.6px;width:577.0px;height:2.0px;background:#e6e6e6;"></div>
<div class="b" style="left:2251.0px;top:1077.7px;width:577.0px;height:2.0px;background:#e6e6e6;"></div>
<div class="b" style="left:2251.0px;top:1124.6px;width:577.0px;height:2.0px;background:#e6e6e6;"></div>
<div class="b" style="left:2251.0px;top:1173.8px;width:577.0px;height:2.0px;background:#e6e6e6;"></div>
<div class="b" style="left:2251.0px;top:1221.8px;width:577.0px;height:2.0px;background:#e6e6e6;"></div>
<div class="b" style="left:2251.0px;top:1270.2px;width:577.0px;height:2.0px;background:#e6e6e6;"></div>
<div class="b" style="left:2251.0px;top:1349.7px;width:577.0px;height:2.0px;background:#e6e6e6;"></div>
<div class="b" style="left:2251.0px;top:1398.6px;width:577.0px;height:2.0px;background:#e6e6e6;"></div>
<div class="b" style="left:2251.0px;top:1446.6px;width:577.0px;height:2.0px;background:#e6e6e6;"></div>
<div class="b" style="left:2251.0px;top:1494.6px;width:577.0px;height:2.0px;background:#e6e6e6;"></div>
<div class="b" style="left:2251.0px;top:1542.7px;width:577.0px;height:2.0px;background:#e6e6e6;"></div>
<div class="b" style="left:2591.4px;top:966.5px;width:2.0px;height:612.5px;background:#e6e6e6;"></div>
<div class="t" style="left:2260.7px;top:1043.8px;font-size:23.2px;line-height:23.2px;font-weight:400;color:#252423;letter-spacing:0.365px;">Level 5 Reinforcing</div>
<div class="t" style="left:2603.7px;top:1043.8px;font-size:23.2px;line-height:23.2px;font-weight:400;color:#252423;letter-spacing:0.560px;">45000 lb</div>
<div class="t" style="left:2260.7px;top:1092.9px;font-size:23.2px;line-height:23.2px;font-weight:400;color:#252423;letter-spacing:0.365px;">Level 7 Reinforcing</div>
<div class="t" style="left:2603.7px;top:1092.9px;font-size:23.2px;line-height:23.2px;font-weight:400;color:#252423;letter-spacing:0.560px;">45000 lb</div>
<div class="t" style="left:2260.7px;top:1139.8px;font-size:23.2px;line-height:23.2px;font-weight:400;color:#252423;letter-spacing:0.365px;">Level 8 Reinforcing</div>
<div class="t" style="left:2603.7px;top:1139.8px;font-size:23.2px;line-height:23.2px;font-weight:400;color:#252423;letter-spacing:0.560px;">45000 lb</div>
<div class="t" style="left:2261.6px;top:1189.0px;font-size:23.2px;line-height:23.2px;font-weight:400;color:#252423;letter-spacing:0.542px;">Shipment of Deck rebar</div>
<div class="t" style="left:2603.7px;top:1189.0px;font-size:23.2px;line-height:23.2px;font-weight:400;color:#252423;letter-spacing:0.560px;">45000 lb</div>
<div class="t" style="left:2260.7px;top:1237.0px;font-size:23.2px;line-height:23.2px;font-weight:400;color:#252423;letter-spacing:0.497px;">Plumbing Fixtures</div>
<div class="t" style="left:2603.3px;top:1237.0px;font-size:23.2px;line-height:23.2px;font-weight:400;color:#252423;letter-spacing:1.128px;">3 pkg</div>
<div class="t" style="left:2260.7px;top:1285.4px;font-size:23.2px;line-height:23.2px;font-weight:400;color:#252423;letter-spacing:0.747px;">Parking lot fill (multiple</div>
<div class="t" style="left:2262.3px;top:1317.0px;font-size:23.2px;line-height:23.2px;font-weight:400;color:#252423;letter-spacing:0.426px;">trucks)</div>
<div class="t" style="left:2603.3px;top:1285.4px;font-size:23.2px;line-height:23.2px;font-weight:400;color:#252423;letter-spacing:0.035px;">3 ea</div>
<div class="t" style="left:2261.4px;top:1364.9px;font-size:23.2px;line-height:23.2px;font-weight:400;color:#252423;letter-spacing:0.187px;">Concrete Yards</div>
<div class="t" style="left:2603.0px;top:1364.9px;font-size:23.2px;line-height:23.2px;font-weight:400;color:#252423;letter-spacing:0.637px;">254 cu yd</div>
<div class="t" style="left:2260.7px;top:1413.8px;font-size:23.2px;line-height:23.2px;font-weight:400;color:#252423;letter-spacing:0.030px;">RCP - 21"</div>
<div class="t" style="left:2603.0px;top:1413.8px;font-size:23.2px;line-height:23.2px;font-weight:400;color:#252423;letter-spacing:0.878px;">22 lf</div>
<div class="t" style="left:2261.4px;top:1461.8px;font-size:23.2px;line-height:23.2px;font-weight:400;color:#252423;letter-spacing:0.102px;">Crusher Run</div>
<div class="t" style="left:2603.0px;top:1461.8px;font-size:23.2px;line-height:23.2px;font-weight:400;color:#252423;letter-spacing:0.653px;">20 cu yd</div>
<div class="t" style="left:2261.6px;top:1509.8px;font-size:23.2px;line-height:23.2px;font-weight:400;color:#252423;letter-spacing:0.513px;">Streetlights</div>
<div class="t" style="left:2603.0px;top:1509.8px;font-size:23.2px;line-height:23.2px;font-weight:400;color:#252423;letter-spacing:0.112px;">2 ea</div>
<div class="t" style="left:2260.7px;top:1557.9px;font-size:23.2px;line-height:23.2px;font-weight:400;color:#252423;letter-spacing:0.030px;">RCP - 15"</div>
<div class="t" style="left:2602.5px;top:1557.9px;font-size:23.2px;line-height:23.2px;font-weight:400;color:#252423;letter-spacing:1.023px;">15 lf</div>
</div>
<div class="t" style="left:2272.2px;width:300px;text-align:center;top:980.1px;font-size:23.5px;line-height:23.5px;font-weight:400;color:#252423;letter-spacing:1.031px;-webkit-text-stroke:1.0px #252423;">Description</div>
<div class="t" style="left:2560.4px;width:300px;text-align:center;top:980.1px;font-size:23.5px;line-height:23.5px;font-weight:400;color:#252423;letter-spacing:0.491px;-webkit-text-stroke:1.0px #252423;">Materials Received</div>
<svg style="left:2605.6px;top:1009.0px;" width="17" height="9" viewBox="0 0 17 9"><path d="M0,0 L16.5,0 L8.25,8.7 Z" fill="#000"/></svg>
<div class="b" style="left:2839.4px;top:968.4px;width:18.6px;height:503.6px;background:#a8a8a8;border-radius:9px;"></div>
</body></html>
